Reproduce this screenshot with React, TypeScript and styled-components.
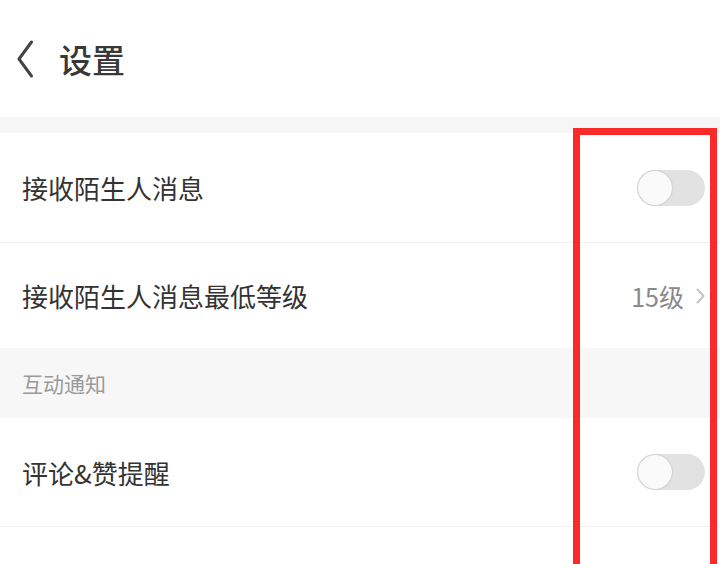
import * as React from 'react';
import styled, { createGlobalStyle } from 'styled-components';

const GlobalStyle = createGlobalStyle`
  html, body {
    margin: 0;
    padding: 0;
    background: #ffffff;
  }
  body {
    font-family: "Noto Sans CJK SC", "Noto Sans", sans-serif;
    color: #333333;
  }
`;

const Page = styled.div`
  position: relative;
  width: 720px;
  height: 564px;
  overflow: hidden;
  background: #ffffff;
`;

const Header = styled.header`
  display: flex;
  align-items: center;
  height: 117px;
  padding: 0 0 0 15px;
  gap: 24px;
  box-sizing: border-box;
`;

const BackButton = styled.button`
  display: flex;
  align-items: center;
  justify-content: center;
  width: 20px;
  height: 40px;
  padding: 0;
  border: none;
  background: transparent;
  cursor: pointer;
`;

const Title = styled.h1`
  margin: 0;
  font-size: 33px;
  font-weight: 500;
  color: #383838;
`;

const Gap = styled.div<{ $h: number }>`
  height: ${(p) => p.$h}px;
  background: #f6f6f6;
`;

const Row = styled.div<{ $h: number; $divider?: boolean }>`
  display: flex;
  align-items: center;
  justify-content: space-between;
  height: ${(p) => p.$h}px;
  padding: 0 15px 0 22px;
  box-sizing: border-box;
  border-bottom: ${(p) => (p.$divider ? '1px solid #efefef' : 'none')};
`;

const Label = styled.span`
  font-size: 26px;
  color: #333333;
`;

const SectionHeader = styled.div`
  display: flex;
  align-items: center;
  height: 70px;
  padding: 0 22px;
  background: #f7f7f7;
  font-size: 21px;
  color: #9a9a9a;
`;

const Value = styled.div`
  display: flex;
  align-items: center;
  gap: 12px;
  font-size: 25px;
  color: #8a8a8a;
`;

const Track = styled.div<{ $on?: boolean }>`
  display: flex;
  align-items: center;
  width: 68px;
  height: 36px;
  border-radius: 18px;
  background: ${(p) => (p.$on ? '#fe2c55' : '#e2e2e2')};
  padding: 1px;
  box-sizing: border-box;
  justify-content: ${(p) => (p.$on ? 'flex-end' : 'flex-start')};
`;

const Knob = styled.div`
  width: 34px;
  height: 34px;
  border-radius: 50%;
  background: #fafafa;
  box-shadow: 0 0 2px rgba(0, 0, 0, 0.25);
`;

// red outline drawn over the right-hand column of controls
const Highlight = styled.div`
  position: absolute;
  left: 573px;
  top: 128px;
  width: 144px;
  height: 460px;
  border: 7px solid #fb2a2a;
  box-sizing: border-box;
  pointer-events: none;
`;

const Switch: React.FC<{ on?: boolean }> = ({ on = false }) => (
  <Track $on={on}>
    <Knob />
  </Track>
);

const BackIcon = () => (
  <svg width="18" height="38" viewBox="0 0 18 38">
    <path d="M15.5 2 L3 19 L15.5 36" fill="none" stroke="#444" strokeWidth="3" strokeLinecap="round" strokeLinejoin="round" />
  </svg>
);

const Chevron = () => (
  <svg width="9" height="16" viewBox="0 0 9 16">
    <path d="M1.5 1.5 L7.5 8 L1.5 14.5" fill="none" stroke="#c4c4c4" strokeWidth="2" strokeLinecap="round" strokeLinejoin="round" />
  </svg>
);

export default function App() {
  return (
    <Page>
      <GlobalStyle />
      <Header>
        <BackButton aria-label="返回">
          <BackIcon />
        </BackButton>
        <Title>设置</Title>
      </Header>
      <Gap $h={16} />
      <Row $h={110} $divider>
        <Label>接收陌生人消息</Label>
        <Switch />
      </Row>
      <Row $h={105}>
        <Label>接收陌生人消息最低等级</Label>
        <Value>
          15级
          <Chevron />
        </Value>
      </Row>
      <SectionHeader>互动通知</SectionHeader>
      <Row $h={109} $divider>
        <Label>评论&amp;赞提醒</Label>
        <Switch />
      </Row>
      <Row $h={100} />
      <Highlight />
    </Page>
  );
}
